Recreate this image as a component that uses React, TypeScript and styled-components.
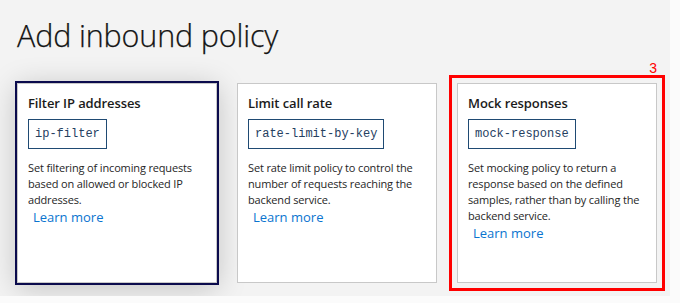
import React from "react";
import styled, { createGlobalStyle } from "styled-components";

const Global = createGlobalStyle`
  html, body { margin: 0; padding: 0; background: #fbfbfb; }
  body { font-family: "Open Sans", "Noto Sans", sans-serif; }
`;

const Page = styled.div`
  width: 670px;
  height: 296px;
  background: #f3f3f3;
  padding: 15px 0 0 17px;
  box-sizing: border-box;
  overflow: hidden;
`;

const Title = styled.h1`
  margin: 0 0 28px 0;
  font-family: "Open Sans", sans-serif;
  font-weight: 300;
  font-size: 30.5px;
  line-height: 40px;
  color: #141414;
  letter-spacing: -0.15px;
  -webkit-text-stroke: 0.25px #141414;
`;

const Row = styled.div`
  display: flex;
  gap: 20px;
`;

const Slot = styled.div`
  position: relative;
`;

const Card = styled.div<{ $selected?: boolean }>`
  width: 200px;
  height: 200px;
  box-sizing: border-box;
  background: #fff;
  border: 1px solid #c8c8c8;
  padding: 9px 10px;
  display: flex;
  flex-direction: column;
  outline: ${(p) => (p.$selected ? "2px solid #0b0b4d" : "none")};
  box-shadow: ${(p) => (p.$selected ? "0 4px 28px rgba(0,0,0,0.22)" : "none")};
`;

const CardTitle = styled.div`
  font-family: "Open Sans", sans-serif;
  font-weight: 600;
  font-size: 13px;
  line-height: 20px;
  color: #1b1b1b;
  letter-spacing: -0.1px;
`;

const Code = styled.div`
  align-self: flex-start;
  margin-top: 6px;
  height: 30px;
  box-sizing: border-box;
  border: 1px solid #1f4a73;
  padding: 0 6px;
  display: flex;
  align-items: center;
  font-family: "Liberation Mono", monospace;
  font-size: 12px;
  color: #25405f;
`;

const Desc = styled.p`
  margin: 11px 0 0 0;
  font-family: "Open Sans", sans-serif;
  font-size: 11px;
  line-height: 16px;
  color: #262626;
  letter-spacing: -0.15px;
`;

const Learn = styled.a`
  margin-top: -1px;
  padding-left: 5px;
  font-family: "Open Sans", sans-serif;
  font-size: 13px;
  line-height: 20px;
  color: #0a74cf;
  text-decoration: none;
`;

const Highlight = styled.div`
  position: absolute;
  inset: -8px;
  border: 3px solid #ff0000;
  pointer-events: none;
`;

const Badge = styled.span`
  position: absolute;
  right: 5px;
  bottom: calc(100% + 2px);
  font-family: "Liberation Sans", Arial, sans-serif;
  font-size: 14px;
  line-height: 16px;
  color: #ff0000;
`;

type Policy = {
  title: string;
  code: string;
  desc: string;
  selected?: boolean;
  marked?: string;
};

const policies: Policy[] = [
  {
    title: "Filter IP addresses",
    code: "ip-filter",
    desc: "Set filtering of incoming requests based on allowed or blocked IP addresses.",
    selected: true,
  },
  {
    title: "Limit call rate",
    code: "rate-limit-by-key",
    desc: "Set rate limit policy to control the number of requests reaching the backend service.",
  },
  {
    title: "Mock responses",
    code: "mock-response",
    desc: "Set mocking policy to return a response based on the defined samples, rather than by calling the backend service.",
    marked: "3",
  },
];

export default function App() {
  return (
    <>
      <Global />
      <Page>
        <Title>Add inbound policy</Title>
        <Row>
          {policies.map((p) => (
            <Slot key={p.code}>
              <Card $selected={p.selected}>
                <CardTitle>{p.title}</CardTitle>
                <Code>{p.code}</Code>
                <Desc>{p.desc}</Desc>
                <Learn href="#">Learn more</Learn>
              </Card>
              {p.marked && (
                <Highlight>
                  <Badge>{p.marked}</Badge>
                </Highlight>
              )}
            </Slot>
          ))}
        </Row>
      </Page>
    </>
  );
}
